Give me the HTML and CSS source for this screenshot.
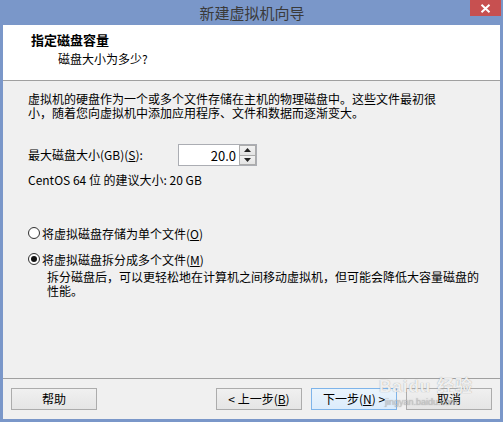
FILE: index.html
```html
<!DOCTYPE html>
<html lang="zh-CN">
<head>
<meta charset="utf-8">
<title>新建虚拟机向导</title>
<link rel="stylesheet" href="styles.css">
</head>
<body>
<div class="window">
  <div class="titlebar">
    <span class="title">新建虚拟机向导</span>
    <div class="close">
      <svg width="11" height="9" viewBox="0 0 11 9"><path d="M1.5 0.8 L9.5 8.2 M9.5 0.8 L1.5 8.2" stroke="#fff" stroke-width="2" fill="none"/></svg>
    </div>
  </div>
  <div class="client">
    <div class="header">
      <div class="h-title">指定磁盘容量</div>
      <div class="h-sub">磁盘大小为多少?</div>
    </div>
    <div class="body">
      <p class="intro">虚拟机的硬盘作为一个或多个文件存储在主机的物理磁盘中。这些文件最初很<br>小，随着您向虚拟机中添加应用程序、文件和数据而逐渐变大。</p>
      <div class="size-row">
        <span class="size-label">最大磁盘大小(GB)(<u>S</u>):</span>
        <div class="spinner">
          <span class="spin-value">20.0</span>
          <div class="spin-btns">
            <div class="spin-btn"><svg width="7" height="4" viewBox="0 0 7 4"><path d="M0 4 L3.5 0 L7 4 Z" fill="#222"/></svg></div>
            <div class="spin-btn"><svg width="7" height="4" viewBox="0 0 7 4"><path d="M0 0 L3.5 4 L7 0 Z" fill="#222"/></svg></div>
          </div>
        </div>
      </div>
      <p class="recommend">CentOS 64 位 的建议大小: 20 GB</p>
      <div class="radio-row first">
        <span class="radio"></span>
        <span>将虚拟磁盘存储为单个文件(<u>O</u>)</span>
      </div>
      <div class="radio-row">
        <span class="radio checked"><span class="dot"></span></span>
        <span>将虚拟磁盘拆分成多个文件(<u>M</u>)</span>
      </div>
      <p class="desc">拆分磁盘后，可以更轻松地在计算机之间移动虚拟机，但可能会降低大容量磁盘的<br>性能。</p>
    </div>
    <div class="footer">
      <button class="btn">帮助</button>
      <div class="spacer"></div>
      <button class="btn">&lt; 上一步(<u>B</u>)</button>
      <button class="btn default">下一步(<u>N</u>) &gt;</button>
      <button class="btn">取消</button>
    </div>
    <div class="watermark">
      <span class="wm-big">Bai<b>du</b> 经验</span>
      <span class="wm-small">jingyan.baidu.com</span>
    </div>
  </div>
</div>
</body>
</html>
```
FILE: styles.css
```css
* { box-sizing: border-box; }
html, body {
  margin: 0;
  padding: 0;
}
body {
  width: 503px;
  height: 422px;
  overflow: hidden;
  font-family: "Noto Sans CJK SC", "Microsoft YaHei", sans-serif;
  font-size: 12px;
  color: #000;
}
.window {
  width: 503px;
  height: 422px;
  background: #7a97c9;
  display: flex;
  flex-direction: column;
}
.titlebar {
  height: 25px;
  position: relative;
  display: flex;
  justify-content: center;
  align-items: center;
}
.title {
  font-size: 15px;
  line-height: 25px;
  color: #3a3a3a;
  margin-left: 1px;
}
.close {
  position: absolute;
  top: 0;
  right: 2px;
  width: 31px;
  height: 16px;
  background: #c75050;
  display: flex;
  align-items: center;
  justify-content: center;
}
.client {
  position: relative;
  flex: 1;
  margin: 0 3px 3px 3px;
  background: #f0f0f0;
  display: flex;
  flex-direction: column;
}
.header {
  height: 56px;
  background: #fff;
  border-bottom: 1px solid #a0a0a0;
  padding: 7px 0 0 28px;
}
.h-title {
  font-size: 13px;
  font-weight: bold;
  line-height: 16px;
}
.h-sub {
  line-height: 16px;
  margin-top: 3px;
  padding-left: 27px;
}
.body {
  flex: 1;
  padding: 11px 0 0 25px;
}
p { margin: 0; }
.intro {
  line-height: 14px;
}
.size-row {
  margin-top: 24px;
  display: flex;
  align-items: center;
  height: 22px;
}
.size-label {
  width: 150px;
  line-height: 14px;
}
.spinner {
  width: 79px;
  height: 22px;
  border: 1px solid #abadb3;
  background: #fff;
  display: flex;
  align-items: center;
}
.spin-value {
  flex: 1;
  text-align: right;
  padding-right: 3px;
  font-size: 13px;
}
.spin-btns {
  width: 17px;
  height: 20px;
  display: flex;
  flex-direction: column;
}
.spin-btn {
  flex: 1;
  border: 1px solid #acacac;
  background: linear-gradient(#f2f2f2, #e4e4e4);
  display: flex;
  align-items: center;
  justify-content: center;
}
.spin-btn + .spin-btn { border-top: none; }
.recommend {
  margin-top: 7px;
  line-height: 14px;
}
.radio-row {
  display: flex;
  align-items: center;
  height: 14px;
  margin-top: 12px;
}
.radio-row.first {
  margin-top: 39px;
}
.radio {
  width: 12px;
  height: 12px;
  border-radius: 50%;
  border: 1px solid #333;
  background: radial-gradient(circle, #fff 55%, #ececec);
  margin-right: 2px;
  display: flex;
  align-items: center;
  justify-content: center;
}
.dot {
  width: 6px;
  height: 6px;
  border-radius: 50%;
  background: #111;
}
.desc {
  margin-top: 4px;
  padding-left: 19px;
  line-height: 14px;
}
.footer {
  height: 41px;
  border-top: 1px solid #a0a0a0;
  padding: 9px 8px 8px 8px;
  display: flex;
  gap: 9px;
}
.spacer { flex: 1; }
.btn {
  width: 86px;
  height: 22px;
  border: 1px solid #acacac;
  background: linear-gradient(#f0f0f0, #e5e5e5);
  font-family: inherit;
  font-size: 12px;
  color: #000;
  padding: 0;
  line-height: 20px;
}
.btn.default {
  border-color: #7eb4ea;
  background: linear-gradient(#eaf4fc, #dcecfc);
}
.watermark {
  position: absolute;
  right: 27px;
  bottom: 12px;
  display: flex;
  flex-direction: column;
  align-items: flex-start;
  color: rgba(255, 255, 255, 0.85);
  text-shadow: 0 0 1px rgba(110, 110, 110, 0.7);
  pointer-events: none;
  font-family: "Liberation Sans", "Noto Sans CJK SC", sans-serif;
}
.wm-big {
  font-size: 17px;
  font-weight: bold;
  line-height: 20px;
  letter-spacing: 1px;
}
.wm-big b { font-weight: bold; }
.wm-small {
  font-size: 9px;
  line-height: 10px;
  margin-left: 6px;
  color: rgba(210, 210, 210, 0.7);
}
```
